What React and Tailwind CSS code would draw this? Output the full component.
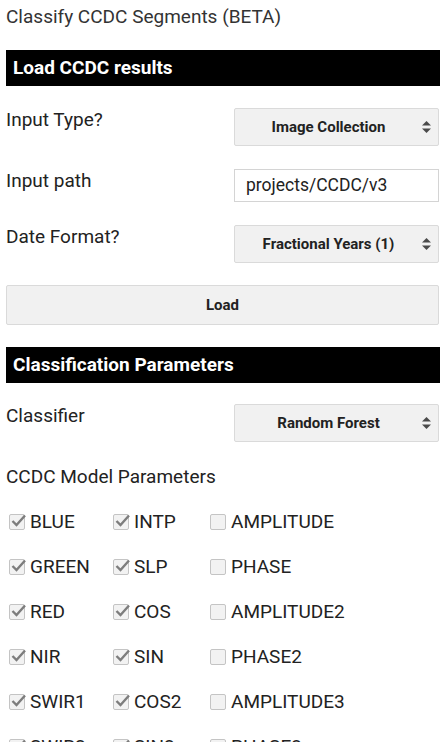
import React from 'react'

function UpDownArrows() {
  return (
    <svg width="9" height="12" viewBox="0 0 9 12" className="shrink-0">
      <path d="M4.5 0 L9 4.5 L0 4.5 Z" fill="#4a4a4a" />
      <path d="M0 7.5 L9 7.5 L4.5 12 Z" fill="#4a4a4a" />
    </svg>
  )
}

function Select({ value }) {
  return (
    <div className="w-[205px] h-[38px] flex items-center pr-[7px] rounded-[2px] border border-[#dadada] bg-[#f1f1f1]">
      <span className="flex-1 text-center text-[15px] font-bold text-[#222]">{value}</span>
      <UpDownArrows />
    </div>
  )
}

function Row({ label, children, className }) {
  return (
    <div className={`flex items-start ${className}`}>
      <div className="w-[228px] pt-[1px] text-[19px] leading-[21px]">{label}</div>
      {children}
    </div>
  )
}

function Header({ children, className }) {
  return (
    <div className={`h-[36px] bg-black text-white font-bold text-[19px] flex items-center pl-[7px] ${className}`}>
      {children}
    </div>
  )
}

function Checkbox({ label, checked }) {
  return (
    <div className="flex items-center h-[21px]">
      <div className="ml-[3px] w-[16px] h-[16px] rounded-[2px] border border-[#c4c4c4] bg-[#f2f2f2] flex items-center justify-center shrink-0">
        {checked && (
          <svg width="17" height="17" viewBox="0 0 17 17" className="-mt-[3px] ml-[2px] overflow-visible">
            <path d="M2.5 9 L6.5 13 L15 3.5" fill="none" stroke="#7d7d7d" strokeWidth="2.4" />
          </svg>
        )}
      </div>
      <span className="ml-[5px] text-[19px] leading-[21px] whitespace-nowrap">{label}</span>
    </div>
  )
}

const rows = [
  ['BLUE', 'INTP', 'AMPLITUDE'],
  ['GREEN', 'SLP', 'PHASE'],
  ['RED', 'COS', 'AMPLITUDE2'],
  ['NIR', 'SIN', 'PHASE2'],
  ['SWIR1', 'COS2', 'AMPLITUDE3'],
  ['SWIR2', 'SIN2', 'PHASE3'],
  ['THERMAL', 'COS3', 'RMSE'],
]

export default function App() {
  return (
    <div className="w-[447px] min-h-screen bg-white pl-[6px] pr-[7px] pb-[20px] font-['Roboto',sans-serif] text-[#222]">
      <div className="pt-[6px] text-[19px] leading-[21px] text-[#333]">Classify CCDC Segments (BETA)</div>

      {/* Load section */}
      <Header className="mt-[23px]">Load CCDC results</Header>

      <Row label="Input Type?" className="mt-[22px]">
        <Select value="Image Collection" />
      </Row>

      <Row label="Input path" className="mt-[23px]">
        <div className="w-[205px] h-[33px] flex items-center pl-[11px] border border-[#d4d4d4] bg-white text-[17.5px]">
          projects/CCDC/v3
        </div>
      </Row>

      <Row label="Date Format?" className="mt-[23px]">
        <Select value="Fractional Years (1)" />
      </Row>

      <div className="mt-[22px] mr-[1px] h-[40px] flex items-center justify-center rounded-[2px] border border-[#dadada] bg-[#f1f1f1] text-[15px] font-bold">
        Load
      </div>

      {/* Classification section */}
      <Header className="mt-[22px]">Classification Parameters</Header>

      <Row label="Classifier" className="mt-[21px]">
        <Select value="Random Forest" />
      </Row>

      <div className="mt-[24px] text-[19px] leading-[21px]">CCDC Model Parameters</div>

      {rows.map(([a, b, c]) => (
        <div key={a} className="mt-[24px] flex">
          <div className="w-[104px]"><Checkbox label={a} checked /></div>
          <div className="w-[97px]"><Checkbox label={b} checked /></div>
          <div><Checkbox label={c} /></div>
        </div>
      ))}
    </div>
  )
}
